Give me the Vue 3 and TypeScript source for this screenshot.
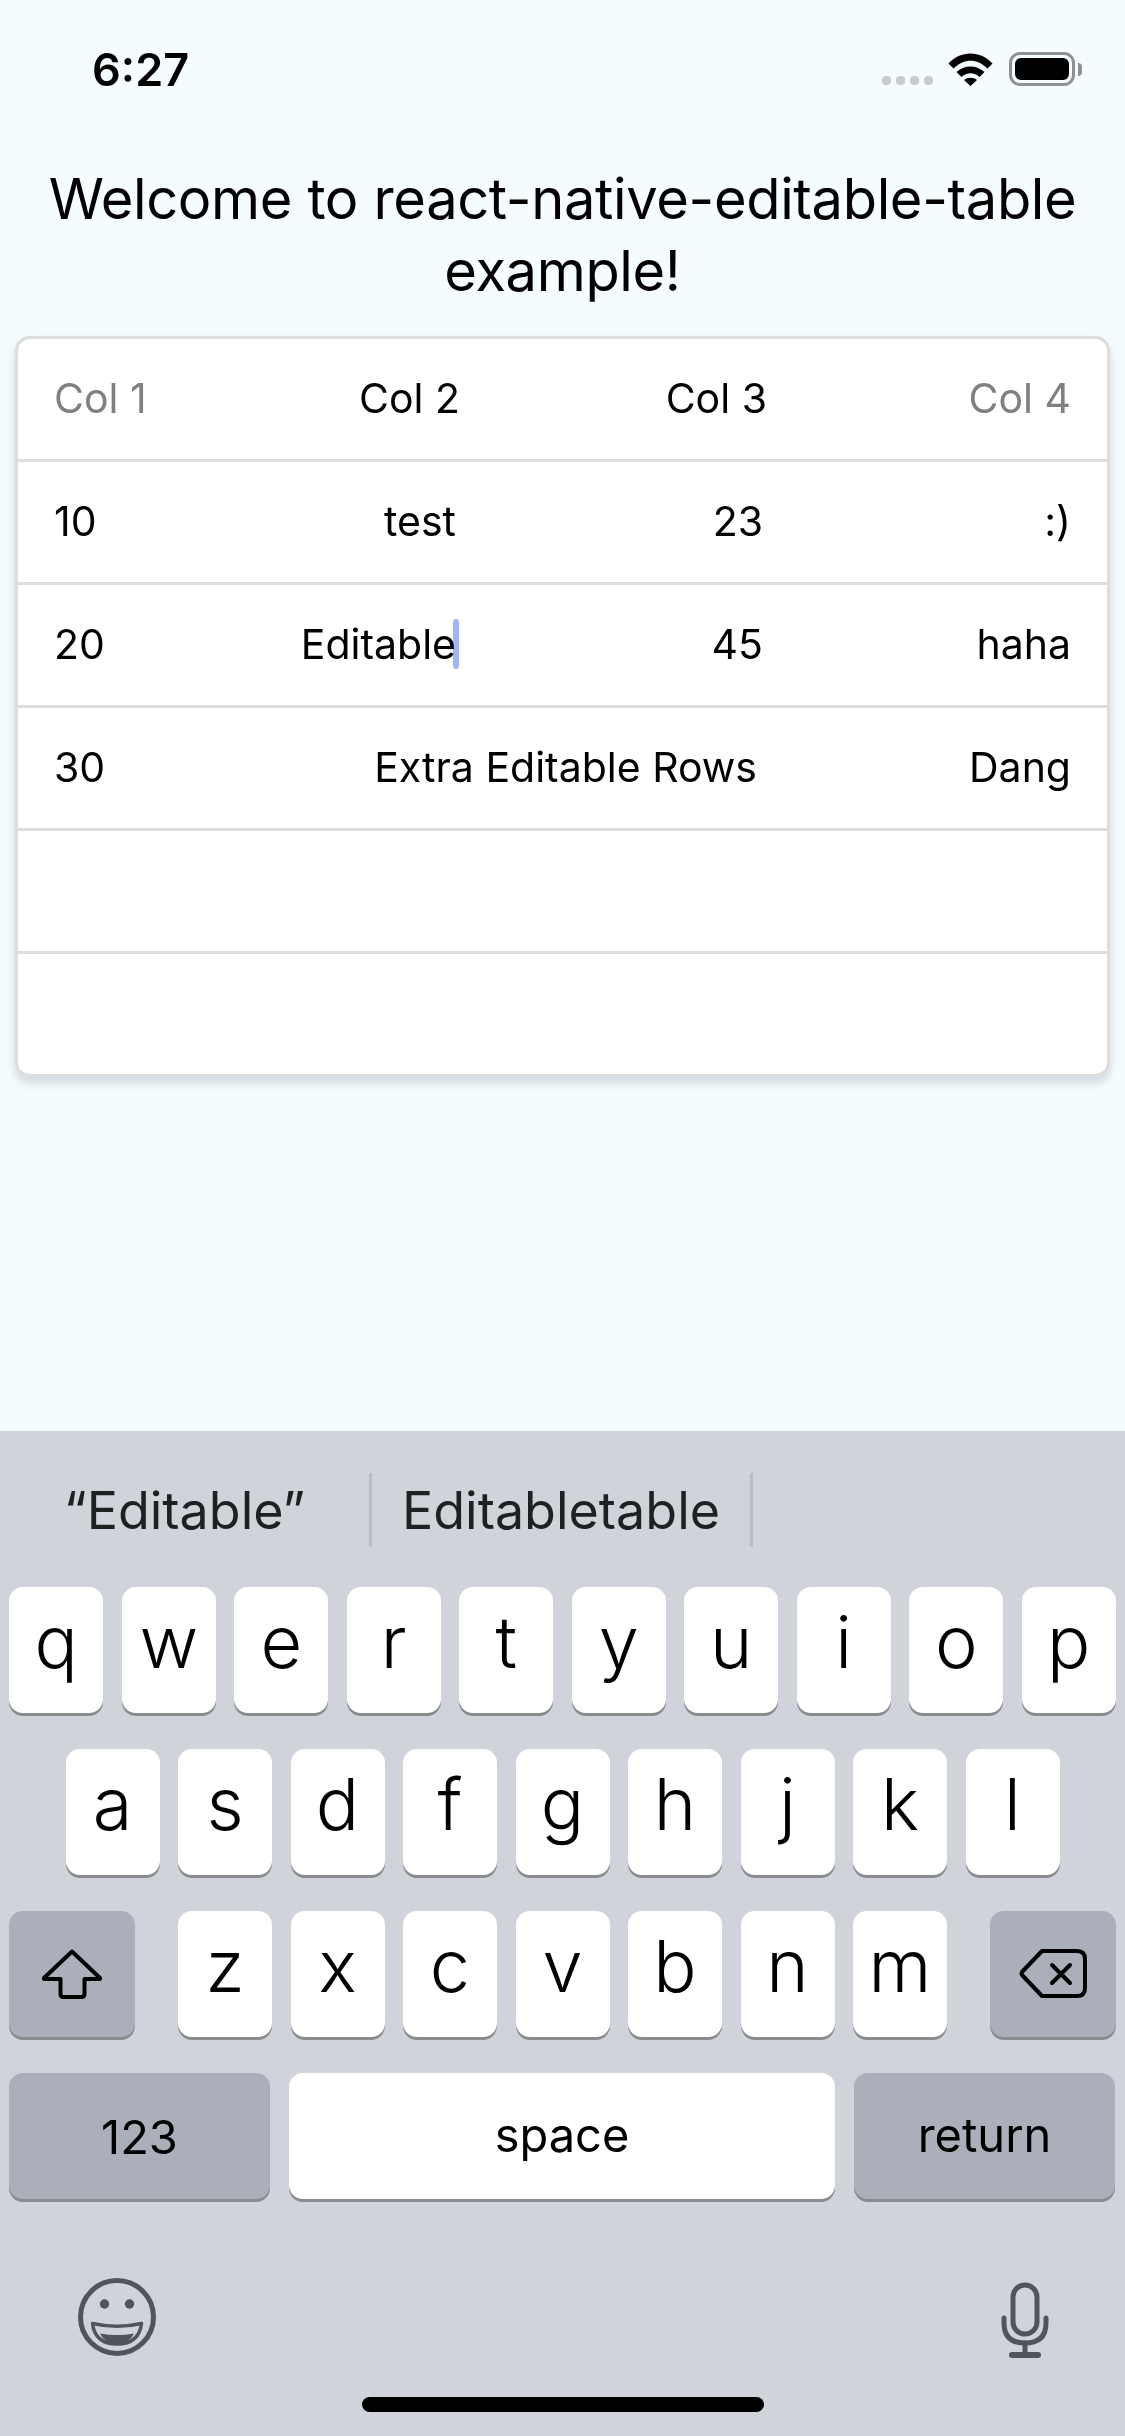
<script setup lang="ts">
interface Cell {
  text: string;
  span?: number;
  muted?: boolean;
  caret?: boolean;
  head?: boolean;
}

const rows: Cell[][] = [
  [
    { text: "Col 1", muted: true, head: true },
    { text: "Col 2", head: true },
    { text: "Col 3", head: true },
    { text: "Col 4", muted: true, head: true },
  ],
  [{ text: "10" }, { text: "test" }, { text: "23" }, { text: ":)" }],
  [{ text: "20" }, { text: "Editable", caret: true }, { text: "45" }, { text: "haha" }],
  [{ text: "30" }, { text: "Extra Editable Rows", span: 2 }, { text: "Dang" }],
  [],
  [],
];

const topKeys = ["q", "w", "e", "r", "t", "y", "u", "i", "o", "p"];
const midKeys = ["a", "s", "d", "f", "g", "h", "j", "k", "l"];
const lowKeys = ["z", "x", "c", "v", "b", "n", "m"];
</script>

<template>
  <div class="screen">
    <div class="status">
      <span class="time">6:27</span>
      <div class="signal">
        <i v-for="n in 4" :key="n" class="dot"></i>
      </div>
      <svg class="wifi" width="45" height="33" viewBox="0 0 45 33">
        <path d="M0.5 10.5C12-3 33-3 44.5 10.5L39.5 15.5C29 5 16 5 5.5 15.5Z" />
        <path d="M8.5 19C16 11.5 29 11.5 36.5 19L31.5 24C26 19 19 19 13.5 24Z" />
        <path d="M16 27C19.5 24 25.5 24 29 27L22.5 33Z" />
      </svg>
      <div class="battery"><div class="level"></div></div>
      <div class="nub"></div>
    </div>

    <h1 class="title">Welcome to react-native-editable-table example!</h1>

    <div class="table">
      <div v-for="(row, r) in rows" :key="r" class="row">
        <div
          v-for="(cell, c) in row"
          :key="c"
          class="cell"
          :class="{
            first: c === 0,
            last: c === row.length - 1,
            head: cell.head,
            muted: cell.muted,
            wide: cell.span,
          }"
        >
          <span class="value">{{ cell.text }}<i v-if="cell.caret" class="caret"></i></span>
        </div>
      </div>
    </div>

    <div class="keyboard">
      <div class="suggestions">
        <div class="suggestion">“Editable”</div>
        <div class="suggestion">Editabletable</div>
        <div class="suggestion"></div>
      </div>

      <div class="keys">
        <div class="key-row">
          <div v-for="k in topKeys" :key="k" class="key letter">{{ k }}</div>
        </div>
        <div class="key-row">
          <div v-for="k in midKeys" :key="k" class="key letter">{{ k }}</div>
        </div>
        <div class="key-row split">
          <div class="key action">
            <svg width="64" height="54" viewBox="0 0 64 54" fill="none" stroke="#000" stroke-width="4" stroke-linejoin="round">
              <path d="M32 4.5L60 31Q60.5 32 59 32H44.5V47Q44.5 50 41.5 50H23.5Q20.5 50 20.5 47V32H5Q3.5 32 4 31Z" />
            </svg>
          </div>
          <div class="letters">
            <div v-for="k in lowKeys" :key="k" class="key letter">{{ k }}</div>
          </div>
          <div class="key action">
            <svg width="70" height="52" viewBox="0 0 70 52" fill="none" stroke="#000" stroke-width="4" stroke-linecap="round" stroke-linejoin="round">
              <path d="M24 3H59Q67 3 67 11V40Q67 48 59 48H24L4 27Q3 25.5 4 24Z" />
              <path d="M34 17L52 35M52 17L34 35" />
            </svg>
          </div>
        </div>
        <div class="key-row bottom">
          <div class="key wide-key label">123</div>
          <div class="key space label raised">space</div>
          <div class="key wide-key label raised">return</div>
        </div>
      </div>

      <div class="tools">
        <svg class="emoji" width="84" height="84" viewBox="0 0 84 84">
          <circle cx="42" cy="42" r="36.5" fill="none" stroke="#51545b" stroke-width="5" />
          <circle cx="29.5" cy="29" r="4.7" fill="#51545b" />
          <circle cx="54.5" cy="29" r="4.7" fill="#51545b" />
          <path d="M17.5 48.5Q42 54 66.5 48.5Q64 69 42 69Q20 69 17.5 48.5Z" fill="none" stroke="#51545b" stroke-width="3.5" stroke-linejoin="round" />
          <path d="M25 58.5Q42 61.5 59 58.5Q54 69 42 69Q30 69 25 58.5Z" fill="#51545b" />
        </svg>
        <svg class="mic" width="48" height="78" viewBox="0 0 48 78" fill="none" stroke="#51545b" stroke-width="5" stroke-linecap="round">
          <rect x="12" y="3" width="24" height="49" rx="12" />
          <path d="M3 36V41Q3 61 24 61Q45 61 45 41V36" />
          <path d="M24 61V73" />
          <path d="M11 73H37" stroke-width="6" />
        </svg>
      </div>

      <div class="home-bar"></div>
    </div>
  </div>
</template>

<style scoped>
.screen {
  display: flex;
  flex-direction: column;
  width: 1125px;
  height: 2436px;
  overflow: hidden;
  background: #f5fcff;
  font-family: Inter, "Noto Sans", sans-serif;
  color: #000;
}

/* status bar */
.status {
  display: flex;
  align-items: center;
  height: 34px;
  margin-top: 52px;
  padding: 0 43px 0 92px;
}

.time {
  flex: 1;
  font-size: 45px;
  font-weight: 600;
}

.signal {
  display: flex;
  gap: 5px;
  align-self: flex-end;
  margin-right: 15px;
  padding-bottom: 1px;
}

.dot {
  width: 9px;
  height: 9px;
  border-radius: 4px;
  background: #c8ccd0;
}

.wifi {
  margin-right: 16px;
  fill: #000;
}

.battery {
  box-sizing: border-box;
  width: 66px;
  height: 34px;
  padding: 3px;
  border: 3px solid #8e9094;
  border-radius: 11px;
}

.level {
  height: 100%;
  border-radius: 6px;
  background: #000;
}

.nub {
  width: 4px;
  height: 13px;
  margin-left: 3px;
  border-radius: 0 4px 4px 0;
  background: #8e9094;
}

/* heading */
.title {
  margin: 77px 30px 29px;
  font-size: 56px;
  font-weight: 400;
  line-height: 72px;
  letter-spacing: -0.35px;
  text-align: center;
}

/* table */
.table {
  margin: 0 15px;
  border: 3px solid #ddd;
  border-bottom: 0;
  border-radius: 15px;
  background: #fff;
  box-shadow: 0 6px 10px rgba(0, 0, 0, 0.15);
}

.row {
  box-sizing: border-box;
  display: grid;
  grid-template-columns: 96px 310px 307px 304px;
  align-items: center;
  height: 123px;
  padding: 0 37px 0 36px;
  border-bottom: 3px solid #ddd;
}

.row:last-child {
  border-radius: 0 0 13px 13px;
}

.cell {
  padding: 0 4px 2px 0;
  font-size: 41px;
  text-align: right;
  white-space: nowrap;
}

.cell.head {
  padding-right: 0;
}

.cell.first,
.cell.last {
  padding-right: 0;
  text-align: left;
}

.cell.last {
  text-align: right;
}

.cell.muted {
  color: #808080;
}

.cell.wide {
  grid-column: span 2;
  padding-right: 10px;
}

.value {
  position: relative;
}

.caret {
  position: absolute;
  top: 0;
  right: -3px;
  width: 6px;
  height: 50px;
  border-radius: 3px;
  background: #a2b5f6;
  mix-blend-mode: multiply;
}

/* keyboard */
.keyboard {
  display: flex;
  flex: 1;
  flex-direction: column;
  margin-top: 354px;
  background: #d0d3da;
}

.suggestions {
  display: grid;
  grid-template-columns: 372px 381px 1fr;
  height: 74px;
  margin-top: 42px;
}

.suggestion {
  display: flex;
  align-items: center;
  justify-content: center;
  border-right: 3px solid #b8bcc4;
  font-size: 52px;
  color: #1f2022;
}

.suggestion:last-child {
  border-right: 0;
}

.keys {
  display: flex;
  flex-direction: column;
  gap: 36px;
  margin-top: 40px;
  padding: 0 9px;
}

.key-row {
  display: flex;
  justify-content: center;
  gap: 18.5px;
}

.key-row.split {
  justify-content: space-between;
  gap: 0;
}

.letters {
  display: flex;
  gap: 18.5px;
}

.key {
  box-sizing: border-box;
  display: flex;
  align-items: center;
  justify-content: center;
  height: 126px;
  border-radius: 14px;
  background: #fff;
  box-shadow: 0 3px 0 #8a8b8f;
}

.letter {
  width: 94px;
  padding-bottom: 17px;
  font-size: 72px;
  font-weight: 300;
}

.action {
  width: 126px;
  background: #abafba;
}

.label {
  font-size: 47px;
}

.raised {
  padding-bottom: 3px;
}

.wide-key {
  width: 261px;
  background: #abafba;
}

.space {
  flex: 1;
}

.key-row.bottom {
  gap: 19px;
  padding-right: 1px;
}

.tools {
  display: flex;
  align-items: flex-start;
  justify-content: space-between;
  margin-top: 73px;
  padding: 0 76px 0 75px;
}

.emoji {
  margin-top: 3px;
}

.mic {
  margin-top: 10px;
}

.home-bar {
  width: 402px;
  height: 15px;
  margin: 37px auto 0;
  border-radius: 8px;
  background: #000;
}
</style>

<style>
html,
body {
  margin: 0;
  background: #f5fcff;
}
</style>
